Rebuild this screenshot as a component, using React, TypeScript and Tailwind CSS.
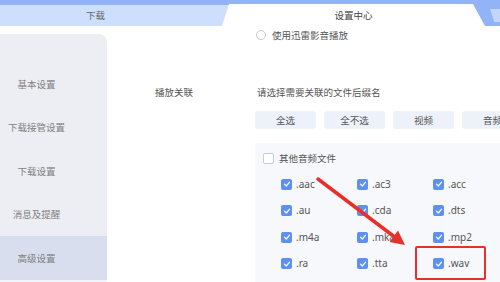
import React from "react";

const font = { fontFamily: '"Noto Sans CJK SC", "Noto Sans", sans-serif' };

function Check({ checked }: { checked: boolean }) {
  if (!checked)
    return <div className="w-[11px] h-[11px] rounded-[2px] border border-[#c9ccd3] bg-white shrink-0" />;
  return (
    <div className="w-[11px] h-[11px] rounded-[2px] bg-[#5e90f1] flex items-center justify-center shrink-0">
      <svg width="8" height="8" viewBox="0 0 8 8">
        <path d="M1.5 4.2 L3.3 6 L6.6 2.2" fill="none" stroke="white" strokeWidth="1.2" strokeLinecap="round" strokeLinejoin="round" />
      </svg>
    </div>
  );
}

const exts = [".aac", ".ac3", ".acc", ".au", ".cda", ".dts", ".m4a", ".mka", ".mp2", ".ra", ".tta", ".wav"];
const side = ["基本设置", "下载接管设置", "下载设置", "消息及提醒", "高级设置"];

export default function App() {
  return (
    <div className="relative w-[500px] h-[282px] overflow-hidden bg-white text-[#555]" style={font}>
      {/* header */}
      <div className="h-[26px] bg-[#93b3f7] flex items-end">
        <div className="w-[232px] h-[21px] bg-[#cddffc] flex items-center pl-[86px] text-[9.5px] text-[#666] shrink-0">
          下载
        </div>
        <div className="ml-[-10px] w-[263px] h-[22px] bg-white flex items-center justify-center text-[9.5px] text-[#444] shrink-0 [clip-path:polygon(7px_0,251px_0,263px_100%,0_100%)]">
          设置中心
        </div>
        <div className="flex-1 h-[21px] flex items-center justify-end">
          <div className="w-[12px] h-[13px] bg-[#c3d5fb] mr-[-2px] [clip-path:polygon(0_0,100%_0,100%_100%,35%_100%)]" />
        </div>
      </div>

      {/* body */}
      <div className="flex h-[256px]">
        <div className="w-[107px] mt-[8px] bg-[#edeef3] rounded-tr-[8px] pt-[28px] shrink-0 flex flex-col">
          {side.map((s, i) => (
            <div
              key={s}
              className={`h-[43.5px] flex items-center text-[9.5px] text-[#808080] ${i === 4 ? "bg-[#d9deef]" : ""}`}
            >
              <div className="w-[73px] text-center">{s}</div>
            </div>
          ))}
          <div className="flex-1 bg-[#f3f4f7]" />
        </div>

        <div className="w-[148px] shrink-0 pl-[48px] pt-[59px]">
          <div className="h-[14px] flex items-center text-[9.5px] text-[#555]">播放关联</div>
        </div>

        <div className="flex-1 flex flex-col">
          <div className="mt-[2px] h-[14px] flex items-center gap-[6px]">
            <div className="ml-[1px] w-[10px] h-[10px] rounded-full border border-[#c5c8cf] bg-white" />
            <span className="text-[9.5px] text-[#555]">使用迅雷影音播放</span>
          </div>
          <div className="mt-[43px] h-[14px] flex items-center pl-[2px] text-[9.5px] text-[#555]">
            请选择需要关联的文件后缀名
          </div>
          <div className="mt-[12px] h-[18px] flex gap-[8px]">
            {["全选", "全不选", "视频", "音频"].map((b) => (
              <div
                key={b}
                className="w-[61px] h-[18px] shrink-0 rounded-[3px] bg-[#edf1f9] flex items-center justify-center text-[9.5px] text-[#555]"
              >
                {b}
              </div>
            ))}
          </div>
          <div className="mt-[14px] flex-1 bg-[#f7f8fb] rounded-tl-[3px] pt-[8px]">
            <div className="h-[14px] flex items-center pl-[8px] gap-[5px]">
              <Check checked={false} />
              <span className="text-[9.5px] text-[#555]">其他音频文件</span>
            </div>
            <div className="mt-[12px] pl-[26px] grid grid-cols-[76px_76px_76px] gap-y-[12.5px]">
              {exts.map((e) => (
                <div key={e} className="h-[14px] flex items-center gap-[4px]">
                  <Check checked={true} />
                  <span className="text-[10px] text-[#555]" style={{ fontFamily: '"Noto Sans", sans-serif' }}>
                    {e}
                  </span>
                </div>
              ))}
            </div>
          </div>
        </div>
      </div>

      {/* annotations */}
      <svg className="absolute left-0 top-0 pointer-events-none" width="500" height="282">
        <line x1="318" y1="179" x2="394" y2="236.5" stroke="#e8302a" strokeWidth="3.5" strokeLinecap="round" />
        <polygon points="405,245 389.5,242 398,230.5" fill="#e8302a" />
      </svg>
      <div className="absolute left-[415px] top-[246px] w-[71px] h-[34px] border-2 border-[#e8302a] rounded-[2px]" />
    </div>
  );
}
